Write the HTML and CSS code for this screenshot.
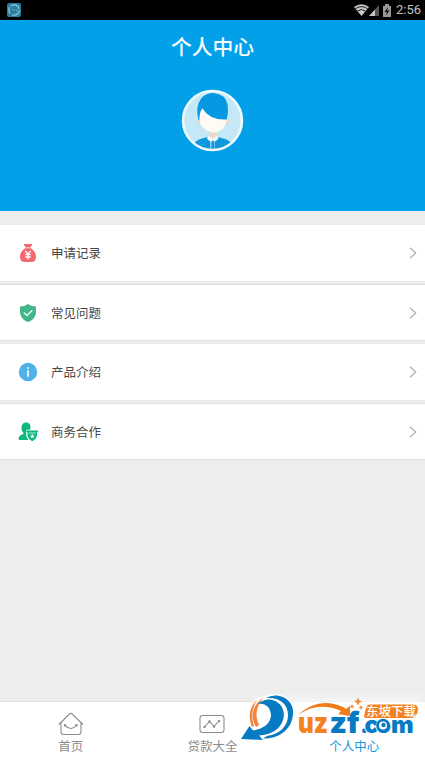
FILE: index.html
```html
<!DOCTYPE html>
<html lang="zh-CN">
<head>
<meta charset="utf-8">
<title>个人中心</title>
<link rel="stylesheet" href="styles.css">
</head>
<body>
<div class="status">
  <svg class="app" width="14" height="14" viewBox="0 0 14 14"><rect width="14" height="14" rx="2" fill="#287f9f"/><circle cx="7" cy="7" r="5.2" fill="none" stroke="#8fc4d3" stroke-width="1.3" stroke-dasharray="10 2 7 1.5"/><path d="M4.5 6.5h1M7 7h1M9 7.500h1" stroke="#8fc4d3"/></svg>
  <svg class="signals" width="40" height="16" viewBox="0 0 40 16">
    <path d="M0 5Q7.500-.5 15 5L7.500 14Z" fill="#c9c9c9"/>
    <path d="M1.500 6.700Q7.500 2.500 13.500 6.700M3.500 9Q7.500 6 11.500 9" fill="none" stroke="#111" stroke-width="1"/>
    <path d="M15 14L25 3V14Z" fill="#555"/><path d="M15 14L21 7.500V14Z" fill="#c4c4c4"/>
    <path d="M29 4h2V2h4v2h2v11h-8Z" fill="#999"/><path d="M34 5l-3.500 5h2.300l-.8 3.500 3.500-5h-2.200Z" fill="#111"/>
  </svg>
  <span class="time">2:56</span>
</div>
<header class="hero">
  <h1>个人中心</h1>
  <svg class="avatar" width="63" height="63" viewBox="0 0 62 62">
    <defs><clipPath id="face"><circle cx="31" cy="31" r="29"/></clipPath></defs>
    <circle cx="31" cy="31" r="29" fill="#c5e8f8"/>
    <g clip-path="url(#face)">
      <path d="M13 62V53Q17 49 27 47H35Q45 49 50 53V62Z" fill="#0f99dc"/>
      <path d="M27.500 40H35V47L31 50L27.500 47Z" fill="#ecd9c5"/>
      <path d="M27 46L31 49L35.500 46L37 49L33 52V62H29V52L25.500 49Z" fill="#f4fbfd"/>
      <path d="M30 51h2.500l.5 11h-3.500Z" fill="#0f99dc"/>
      <ellipse cx="17.500" cy="32" rx="1.800" ry="3" fill="#ead8c5"/><ellipse cx="45.500" cy="32" rx="1.800" ry="3" fill="#ead8c5"/>
      <path d="M18 18H45V31Q43 42 31.500 43Q20 41 18 30Z" fill="#fffaf4"/>
      <path d="M17 30Q14 17 20 9Q25 4 32 4Q44 5 46 16Q47 23 45 30Q28 31 21 19Q18 23 18 31Z" fill="#0698e3"/>
    </g>
    <circle cx="31" cy="31" r="29" fill="none" stroke="#effbfe" stroke-width="2.500"/>
  </svg>
</header>
<main class="list">
  <div class="row tall">
    <svg class="icon" width="20" height="20" viewBox="0 0 20 20"><path d="M6 1h8v1.800h-1.200V4.500H7.200V2.800H6ZM7 5.300h6C16 7.500 18 10.500 18 13.500Q18 19 13 19H7Q2 19 2 13.500C2 10.500 4 7.500 7 5.300Z" fill="#f2686d"/><path d="M7.300 8L10 11.200L12.700 8M10 11v5.500M7.300 11.700h5.400M7.300 14h5.400" fill="none" stroke="#fff" stroke-width="1.300"/></svg>
    <span class="label">申请记录</span>
    <svg class="arrow" width="8" height="12" viewBox="0 0 8 12"><path d="M1 .8L6.700 6L1 11.200"/></svg>
  </div>
  <div class="row">
    <svg class="icon" width="20" height="20" viewBox="0 0 20 20"><path d="M10 1Q13.500 3.500 18 3.500V10Q17 16.500 10 19Q3 16.500 2 10V3.500Q6.500 3.500 10 1Z" fill="#43b58a"/><path d="M5.800 9.500L9 12.500L14.300 7.300" fill="none" stroke="#e8fff6" stroke-width="1.400"/></svg>
    <span class="label">常见问题</span>
    <svg class="arrow" width="8" height="12" viewBox="0 0 8 12"><path d="M1 .8L6.700 6L1 11.200"/></svg>
  </div>
  <div class="row tall">
    <svg class="icon" width="20" height="20" viewBox="0 0 20 20"><circle cx="10" cy="10" r="9.200" fill="#50b1e8"/><path d="M10 8.300V14.700M10 5.200V6.800" stroke="#e5f7ff" stroke-width="1.900"/></svg>
    <span class="label">产品介绍</span>
    <svg class="arrow" width="8" height="12" viewBox="0 0 8 12"><path d="M1 .8L6.700 6L1 11.200"/></svg>
  </div>
  <div class="row">
    <svg class="icon" width="20" height="20" viewBox="0 0 20 20"><path d="M3.500 5Q4 .5 8 .5Q12.500 .5 12.500 5Q12.500 9 10.500 11V18H1Q0 15.500 2 13.500L6 11.500Q3.200 9 3.500 5Z" fill="#0eb780"/><path d="M8.300 7.800H20.500V14Q19 18 14.500 20Q9.500 18 8.300 14Z" fill="#fff"/><path d="M8.500 8.500H20V10H8.500ZM9.500 10H19V14Q18 17.500 14.300 19.200Q10.500 17.500 9.500 14Z" fill="#0eb780"/><path d="M10.500 11H18" stroke="#d5fff0" stroke-width=".7"/><path d="M14.300 12l.8 1.400 1.600.2-1.200 1.100.3 1.600-1.500-.7-1.500.7.3-1.600-1.200-1.100 1.600-.2Z" fill="#e4fff5"/></svg>
    <span class="label">商务合作</span>
    <svg class="arrow" width="8" height="12" viewBox="0 0 8 12"><path d="M1 .8L6.700 6L1 11.200"/></svg>
  </div>
</main>
<nav class="tabs">
  <div class="tab">
    <svg width="26" height="24" viewBox="0 0 26 24"><path d="M.8 12.500L12 1.500Q12.700.9 13.500 1.500L25 12.500M3 11V20Q3 22.500 5.500 22.500H20.500Q23 22.500 23 20V11M7 13.500Q13 19.500 18.500 13.500"/><circle cx="7" cy="13.300" r=".7"/><circle cx="18.500" cy="13.300" r=".7"/></svg>
    <span>首页</span>
  </div>
  <div class="tab">
    <svg width="26" height="24" viewBox="0 0 26 24"><rect x="1" y="3.500" width="24" height="17" rx="2.500"/><path d="M5.500 15L10.500 9.500L15 14.500L20 9"/><circle cx="5.500" cy="15" r=".7"/><circle cx="10.500" cy="9.500" r=".7"/><circle cx="15" cy="14.500" r=".7"/><circle cx="20" cy="9" r=".7"/></svg>
    <span>贷款大全</span>
  </div>
  <div class="tab active">
    <span class="blank"></span>
    <span>个人中心</span>
  </div>
</nav>
<svg class="brand" width="185" height="62" viewBox="240 690 185 62">
  <defs><filter id="glow" x="-20%" y="-30%" width="140%" height="160%"><feGaussianBlur stdDeviation="4"/></filter></defs>
  <path d="M260 698H425V736H250Z" fill="#fff" opacity=".6" filter="url(#glow)"/>
  <path d="M242 739L252 727Q246 711 258 700L272 696Q292 696 292 714Q290 732 268 737L258 740Z" fill="#fff" stroke="#fff" stroke-width="4" stroke-linejoin="round"/>
  <path d="M264 697C252 705 250 717 256 727L259 725C254 715 257 705 264 697Z" fill="#f1833a"/>
  <path d="M257 700C249 707 248 717 252 727L254 726C251 717 252 708 257 700Z" fill="#f1833a"/>
  <path d="M258 704Q263 699 270 699.500C281 701 286 711 283 720C280 730 270 735 259 735.500L263 740L241 739L249.500 726L253 730.500C263 729 270 724 271 716C271 708 266 703 258 704Z" fill="#077ac4"/>
  <path d="M266 698Q271 695 277 695.500C290 697 296 708 292 720C288 732 277 739 263 738.500L267 736C280 734 288 726 288 715C288 705 281 697 266 698Z" fill="#077ac4"/>
  <text class="logo orange" x="298" y="732.500" textLength="30" lengthAdjust="spacingAndGlyphs">uz</text>
  <text class="logo blue" x="329.500" y="732.500" textLength="30" lengthAdjust="spacingAndGlyphs">zf</text>
  <text class="logo small blue" x="360 364.500 376 391" y="732.500">.com</text>
  <path d="M298 715Q318 696 343 707L346 709L350 706L350 716L338 714L341 711Q318 701 298 715Z" fill="#f17b18"/>
  <circle cx="383" cy="725.500" r="6.800" fill="#077ac4"/><circle cx="383" cy="725.500" r="4" fill="#fff"/><circle cx="383.500" cy="725" r="2.200" fill="#077ac4"/>
  <path d="M358 697.500l1.300 2.700 2.700 1.300-2.700 1.300-1.300 2.700-1.300-2.700-2.700-1.300 2.700-1.300ZM352 704l.8 1.700 1.700.8-1.700.8-.8 1.700-.8-1.700-1.700-.8 1.700-.8ZM361 705l.8 1.700 1.700.8-1.700.8-.8 1.700-.8-1.700-1.700-.8 1.700-.8Z" fill="#f48a35"/>
  <path d="M370 704.500H413Q418 704.500 418 709.500Q417 718 411 718H366Q364 718 364 716L366 708Q367 704.500 370 704.500Z" fill="#f58220" stroke="#fff" stroke-width="1" paint-order="stroke"/>
  <text class="download" x="366" y="715.800" textLength="50" lengthAdjust="spacingAndGlyphs">东坡下载</text>
</svg>
</body>
</html>
```
FILE: styles.css
```css
* { box-sizing: border-box; }
body {
  margin: 0;
  height: 757px;
  display: flex;
  flex-direction: column;
  overflow: hidden;
  background: #ededed;
  font-family: "Noto Sans CJK SC", sans-serif;
}
.status {
  height: 20px;
  flex: none;
  display: flex;
  align-items: center;
  padding: 0 4px 0 7px;
  background: #000;
}
.signals { margin-left: auto; }
.time {
  width: 25px;
  margin-left: 2px;
  color: #c0c0c0;
  font: 13px/20px Roboto, sans-serif;
  white-space: nowrap;
}
.hero {
  height: 191px;
  flex: none;
  display: flex;
  flex-direction: column;
  align-items: center;
  background: #02a0e9;
}
h1 {
  margin: 10px 0 27px;
  color: #f5fdff;
  font-size: 20.800px;
  font-weight: 500;
  line-height: 32px;
}
.list {
  flex: 1;
  padding-top: 14px;
}
.row {
  height: 55px;
  margin-bottom: 4px;
  display: flex;
  align-items: center;
  padding: 0 8px 0 18px;
  background: #fff;
  box-shadow: 0 1px #dfdfdf;
}
.row.tall { height: 56px; box-shadow: none; }
.row.tall + .row { box-shadow: 0 -1px #dfdfdf, 0 1px #dfdfdf; }
.label {
  margin-left: 13px;
  color: #484848;
  font-size: 12.500px;
  line-height: 20px;
}
.arrow { margin-left: auto; }
.arrow path { fill: none; stroke: #b3b3b3; stroke-width: 1.300; }
.tabs {
  height: 56px;
  flex: none;
  display: grid;
  grid-template-columns: repeat(3, 1fr);
  background: #fff;
  border-top: 1px solid #e2e2e2;
}
.tab {
  display: flex;
  flex-direction: column;
  align-items: center;
  padding-top: 10px;
  color: #8c8c8c;
  font-size: 12.500px;
  line-height: 20px;
}
.tab svg { fill: none; stroke: currentColor; stroke-width: 1.100; }
.tab.active { color: #1296db; }
.blank { height: 24px; }
.brand {
  position: absolute;
  right: 0;
  bottom: 5px;
}
.logo {
  font: 900 29px/1 Inter, sans-serif;
  stroke: #fff;
  stroke-width: 2px;
  stroke-linejoin: round;
  paint-order: stroke;
}
.logo.small { font-size: 24px; }
.orange { fill: #f58220; }
.blue { fill: #077ac4; }
.download {
  fill: #fff;
  font: 500 12px/1 "Noto Sans CJK SC", sans-serif;
}
```
